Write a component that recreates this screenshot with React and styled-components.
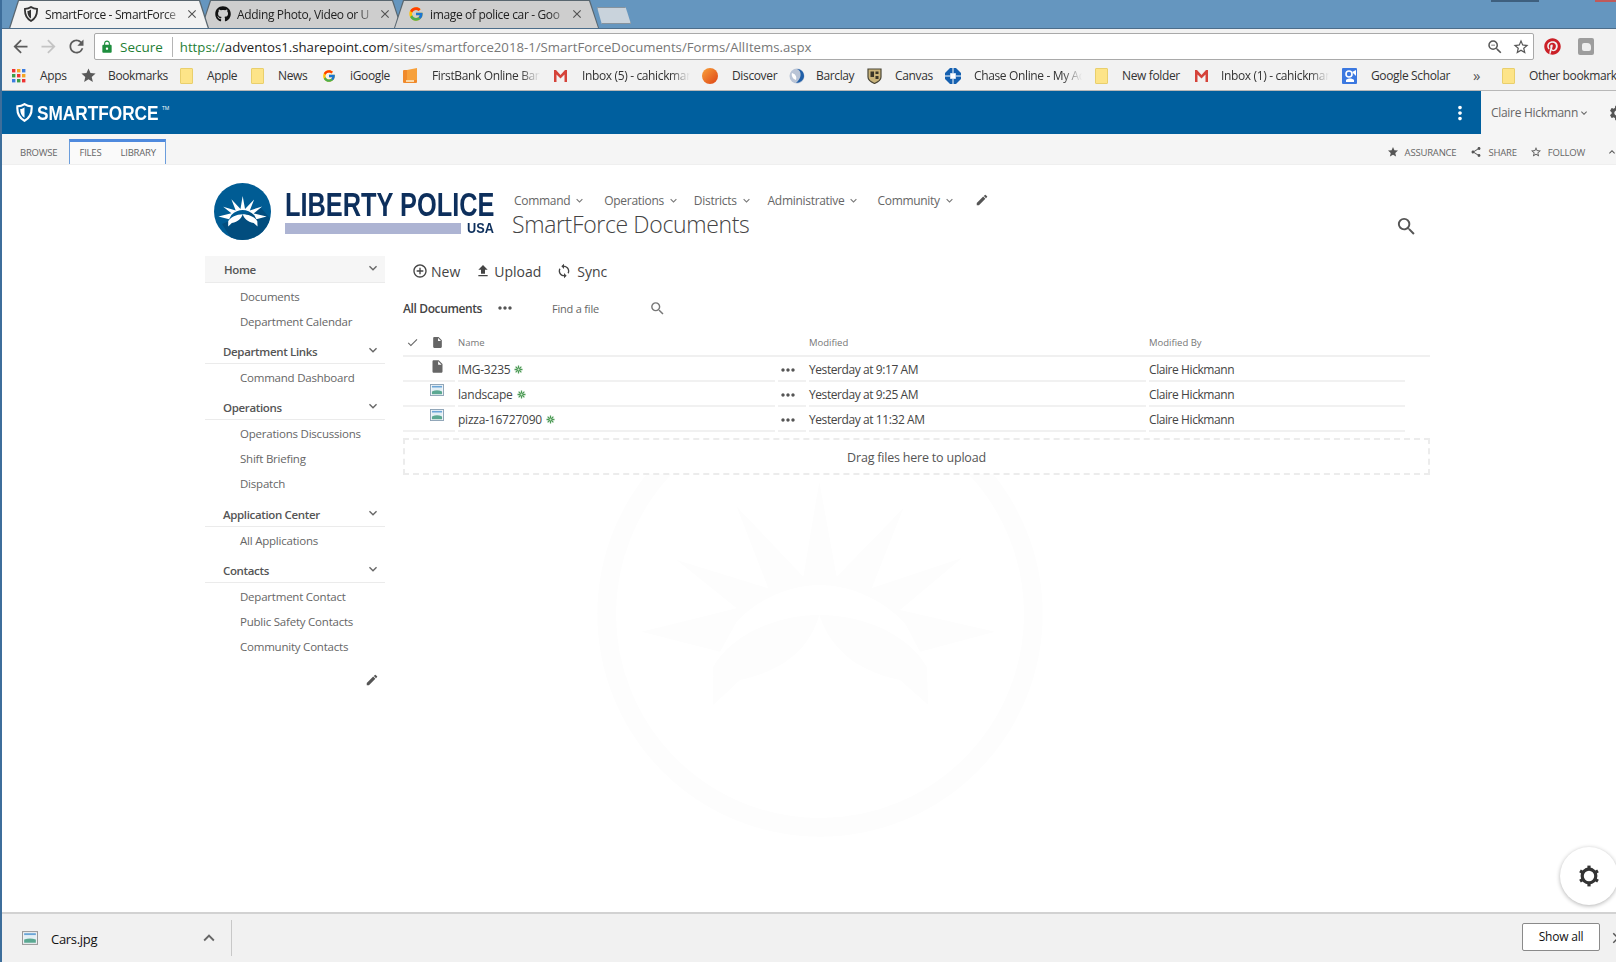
import React from "react";
import styled, { createGlobalStyle } from "styled-components";
import {
  MdAddCircleOutline,
  MdArrowBack,
  MdArrowForward,
  MdCheck,
  MdClose,
  MdEdit,
  MdExpandLess,
  MdExpandMore,
  MdFileUpload,
  MdInsertDriveFile,
  MdLock,
  MdMoreHoriz,
  MdMoreVert,
  MdRefresh,
  MdSearch,
  MdSettings,
  MdShare,
  MdStar,
  MdStarBorder,
  MdSync,
  MdZoomOut,
} from "react-icons/md";
import { FaGithub, FaPinterest } from "react-icons/fa";
import { FcGoogle } from "react-icons/fc";

const GlobalStyle = createGlobalStyle`
  html, body {
    margin: 0;
    padding: 0;
    background: #fff;
    overflow: hidden;
  }
  * { box-sizing: border-box; }
`;

const FONT = `"Open Sans", "Noto Sans", sans-serif`;

const Page = styled.div`
  width: 1616px;
  height: 962px;
  display: flex;
  flex-direction: column;
  overflow: hidden;
  border-left: 2px solid #3d6e9b;
  font-family: ${FONT};
  color: #444;
  background: #fff;
`;

/* ---- browser chrome ---- */
const TabStrip = styled.div`
  height: 29px;
  flex: none;
  display: flex;
  align-items: flex-end;
  padding-left: 7px;
  background: #6596bf;
  border-bottom: 1px solid #4c6d8a;
  position: relative;
`;

const Tab = styled.div`
  width: ${(p) => p.$w}px;
  height: 28px;
  margin-right: -8px;
  position: relative;
  display: flex;
  align-items: center;
  padding: 0 ${(p) => p.$pr}px 0 14px;
  background: #59666f;
  clip-path: polygon(0 100%, 9px 0, calc(100% - 9px) 0, 100% 100%);
  z-index: ${(p) => (p.$active ? 2 : 1)};
  font-size: 12px;
  letter-spacing: -0.35px;
  color: #222;

  &::before {
    content: "";
    position: absolute;
    inset: 1px 1px ${(p) => (p.$active ? "-1px" : "0")} 1px;
    background: ${(p) => (p.$active ? "#f2f2f2" : "#cecece")};
    clip-path: polygon(0 100%, 9px 0, calc(100% - 9px) 0, 100% 100%);
  }

  & > * {
    position: relative;
    z-index: 1;
    flex: none;
  }
`;

const TabLabel = styled.span`
  && {
    flex: 1;
  }
  margin-left: 6px;
  white-space: nowrap;
  overflow: hidden;
  mask-image: linear-gradient(to right, #000 85%, transparent);
`;

const NewTab = styled.div`
  width: 34px;
  height: 17px;
  margin: 0 0 4px 6px;
  background: #c9d3dc;
  border: 1px solid #86939e;
  clip-path: polygon(0 0, 84% 0, 100% 100%, 14% 100%);
`;

const WindowMark = styled.div`
  position: absolute;
  top: 0;
  left: ${(p) => p.$left}px;
  width: ${(p) => p.$w}px;
  height: 2px;
  background: ${(p) => p.$color};
`;

const Toolbar = styled.div`
  height: 35px;
  flex: none;
  display: flex;
  align-items: center;
  padding-left: 4px;
  background: #f2f2f2;
  color: #5f6368;
`;

const NavButton = styled.span`
  width: 28px;
  display: flex;
  justify-content: center;
  font-size: 21px;
  margin-right: ${(p) => p.$mr || 0}px;
  color: ${(p) => (p.$off ? "#c4c4c4" : "#5c5c5c")};
`;

const Omnibox = styled.div`
  width: 1440px;
  height: 27px;
  display: flex;
  align-items: center;
  padding: 0 3px 0 5px;
  background: #fff;
  border: 1px solid #a9a9a9;
  border-radius: 2px;
  font-size: 13.2px;
  white-space: nowrap;
`;

const SecureText = styled.span`
  color: #1e7e34;
  margin-left: 6px;
  font-size: 13.5px;
  padding-right: 9px;
  margin-right: 7px;
  border-right: 1px solid #b5b5b5;
  line-height: 20px;
`;

const UrlScheme = styled.span`
  color: #1e7e34;
`;
const UrlHost = styled.span`
  color: #222;
`;
const UrlPath = styled.span`
  color: #777;
  flex: 1;
`;

const OmniIcon = styled.span`
  display: flex;
  font-size: 18px;
  margin-left: 8px;
  color: #555;
`;

const ExtensionSlot = styled.span`
  display: flex;
  margin-left: ${(p) => p.$gap}px;
  font-size: 17px;
  color: ${(p) => p.$color};
`;

const GreyBadge = styled.span`
  width: 16px;
  height: 17px;
  border-radius: 2px;
  background: #9d9d9d;
  display: flex;
  align-items: center;
  justify-content: center;

  &::after {
    content: "";
    width: 9px;
    height: 8px;
    border-radius: 2px 4px 2px 2px;
    background: #eee;
  }
`;

const BookmarkBar = styled.div`
  height: 27px;
  flex: none;
  display: flex;
  align-items: center;
  padding: 0 0 3px 10px;
  background: #f2f2f2;
  border-bottom: 1px solid #b8b8b8;
  font-size: 12px;
  letter-spacing: -0.36px;
  color: #333;
  white-space: nowrap;
`;

const Bookmark = styled.div`
  flex: none;
  width: ${(p) => p.$w}px;
  display: flex;
  align-items: center;
  gap: ${(p) => p.$gap || 14}px;
`;

const BookmarkLabel = styled.span`
  ${(p) =>
    p.$clip &&
    `
    width: ${p.$clip}px;
    overflow: hidden;
    mask-image: linear-gradient(to right, #000 82%, transparent);
  `}
`;

const Chevrons = styled.span`
  flex: none;
  width: 16px;
  font-size: 15px;
  line-height: 16px;
  margin-top: -2px;
  color: #555;
`;

const BarDivider = styled.span`
  width: 1px;
  height: 18px;
  background: #c4c4c4;
  margin-right: 13px;
`;

const FolderIcon = styled.span`
  flex: none;
  width: 13px;
  height: 16px;
  background: #fde488;
  border: 1px solid #e9cf6c;
  border-radius: 1px;
`;

/* ---- suite bar + ribbon ---- */
const SuiteBar = styled.div`
  height: 43px;
  flex: none;
  display: flex;
  align-items: stretch;
  background: #005f9e;
`;

const Brand = styled.div`
  display: flex;
  align-items: center;
  gap: 3px;
  padding-left: 13px;
  color: #fff;
`;

const BrandName = styled.span`
  width: 122px;
  font-family: "Liberation Sans", sans-serif;
  font-weight: 700;
  font-size: 21px;
  white-space: nowrap;
  transform: scaleX(0.82);
  transform-origin: left center;
`;

const BrandTm = styled.span`
  font-size: 5px;
  margin: -10px 0 0 0;
`;

const SuiteRight = styled.div`
  margin-left: auto;
  display: flex;
  align-items: center;
`;

const SuiteDots = styled.span`
  display: flex;
  font-size: 22px;
  color: #fff;
  margin-right: 10px;
`;

const UserArea = styled.div`
  width: 135px;
  align-self: stretch;
  display: flex;
  align-items: center;
  padding-left: 10px;
  background: #f5f5f5;
  color: #666;
  font-size: 12px;
  letter-spacing: -0.3px;
  white-space: nowrap;

  svg {
    flex: none;
  }
`;

const UserGear = styled.span`
  display: flex;
  flex: none;
  font-size: 18px;
  margin-left: 18px;
  color: #555;
`;

const Ribbon = styled.div`
  height: 31px;
  flex: none;
  display: flex;
  align-items: stretch;
  padding-left: 18px;
  background: #f5f5f5;
  border-bottom: 1px solid #efefef;
  font-size: 9.5px;
  letter-spacing: -0.2px;
  color: #666;
`;

const RibbonTab = styled.span`
  display: flex;
  align-items: center;
  padding-top: 7px;
`;

const RibbonActiveGroup = styled.div`
  width: 97px;
  margin: 5px 0 0 12px;
  display: flex;
  align-items: center;
  gap: 19px;
  padding: 0 0 1px 9px;
  background: #fafafa;
  border: 1px solid #6b9ddc;
  border-top: 3px solid #4f8ade;
  border-bottom: none;
`;

const RibbonActions = styled.div`
  margin-left: auto;
  display: flex;
  align-items: center;
  padding-top: 6px;
`;

const RibbonAction = styled.span`
  display: flex;
  align-items: center;
  gap: 6px;
  margin-right: ${(p) => p.$mr}px;
  font-size: 9.5px;
  white-space: nowrap;

  svg {
    font-size: 12px;
    color: #555;
  }
`;

/* ---- page body ---- */
const Body = styled.div`
  flex: 1;
  min-height: 0;
  position: relative;
  overflow: hidden;
  padding-left: 203px;
`;

const Watermark = styled.svg`
  position: absolute;
  left: 578px;
  top: 309px;
  width: 480px;
  height: 376px;
`;

const Content = styled.div`
  position: relative;
  width: 1225px;
`;

const SiteHeader = styled.header`
  height: 91px;
  display: flex;
  padding: 18px 12px 0 9px;
`;

const Logo = styled.div`
  width: 298px;
  flex: none;
  display: flex;
  gap: 14px;
`;

const LogoText = styled.div`
  width: 210px;
  padding-top: 6px;
  color: #0d2f5c;
  font-family: "Liberation Sans", sans-serif;
  font-weight: 700;
`;

const LogoName = styled.div`
  width: 208px;
  font-size: 32.5px;
  line-height: 32px;
  white-space: nowrap;
  transform: scaleX(0.78);
  transform-origin: left center;
`;

const LogoBottom = styled.div`
  display: flex;
  align-items: center;
  gap: 6px;
  margin-top: 1px;
`;

const LogoBar = styled.span`
  flex: 1;
  height: 11px;
  background: #adb4d3;
`;

const LogoUsa = styled.span`
  width: 28px;
  font-size: 15px;
  line-height: 12px;
  transform: scaleX(0.85);
  transform-origin: left center;
`;

const TitleBlock = styled.div`
  display: flex;
  flex-direction: column;
  flex: 1;
`;

const TopNav = styled.nav`
  display: flex;
  align-items: center;
  height: 20px;
  margin: 7px 0 0 2px;
  font-size: 12px;
  letter-spacing: -0.3px;
  color: #666;
`;

const TopNavItem = styled.span`
  display: flex;
  align-items: center;
  margin-right: ${(p) => p.$mr}px;
  gap: 3px;
  white-space: nowrap;

  svg {
    font-size: 13px;
    color: #777;
  }
`;

const TopPencil = styled.span`
  display: flex;
  font-size: 14px;
  color: #555;
  margin-left: -1px;
`;

const PageTitle = styled.h1`
  margin: 0;
  font-size: 23px;
  line-height: 28px;
  font-weight: 300;
  letter-spacing: -0.35px;
  color: #444;
`;

const HeaderSearch = styled.span`
  display: flex;
  font-size: 23px;
  color: #555;
  margin-top: 32px;
`;

const Columns = styled.div`
  display: flex;
`;

const LeftNav = styled.aside`
  width: 180px;
  flex: none;
  font-size: 11.5px;
  letter-spacing: -0.22px;
`;

const NavHeading = styled.div`
  height: ${(p) => (p.$selected ? 27 : 24)}px;
  margin-top: ${(p) => p.$mt || 0}px;
  display: flex;
  align-items: center;
  justify-content: space-between;
  padding: ${(p) => (p.$selected ? "1px" : 0)} 4px 0 ${(p) => (p.$selected ? 19 : 18)}px;
  background: ${(p) => (p.$selected ? "#f6f6f6" : "transparent")};
  border-bottom: 1px solid #ebebeb;
  font-weight: 600;
  letter-spacing: -0.35px;
  color: #555;

  svg {
    font-size: 16px;
    color: #666;
    margin-top: -4px;
  }
`;

const NavItems = styled.div`
  padding-top: 1px;
`;

const NavItem = styled.div`
  height: 25px;
  display: flex;
  align-items: center;
  padding-left: 35px;
  color: #666;
  white-space: nowrap;
`;

const NavEdit = styled.div`
  display: flex;
  justify-content: flex-end;
  padding: 14px 6px 0 0;
  font-size: 14px;
  color: #555;
`;

const Main = styled.main`
  flex: 1;
  margin-left: 18px;
  min-width: 0;
`;

const CommandBar = styled.div`
  height: 30px;
  display: flex;
  align-items: center;
  padding-left: 9px;
  font-size: 14px;
  color: #444;
`;

const Command = styled.span`
  display: flex;
  align-items: center;
  gap: ${(p) => p.$gap || 3}px;
  margin-right: 15px;

  svg {
    font-size: 16px;
    color: #444;
  }
`;

const ViewBar = styled.div`
  height: 30px;
  margin-top: 7px;
  display: flex;
  align-items: center;
  font-size: 12px;
  letter-spacing: -0.38px;
`;

const ViewName = styled.span`
  font-weight: 600;
  color: #444;
  width: 92px;
`;

const ViewDots = styled.span`
  display: flex;
  width: 57px;
  font-size: 20px;
  color: #555;
`;

const FindFile = styled.span`
  width: 97px;
  font-size: 11px;
  color: #666;
  letter-spacing: -0.2px;
`;

const FindIcon = styled.span`
  display: flex;
  font-size: 17px;
  color: #777;
`;

const TableGrid = styled.div`
  display: grid;
  grid-template-columns: 52px 317px 28px 337px 1fr;
  column-gap: 3px;
`;

const HeaderRow = styled(TableGrid)`
  height: 28px;
  margin-top: 6px;
  align-items: center;
  border-bottom: 2px solid #f0f0f0;
  font-size: 9.5px;
  color: #777;
`;

const HeaderIcons = styled.span`
  display: flex;
  align-items: center;
  padding-left: 3px;
  gap: 12px;
  font-size: 13px;
  color: #666;
`;

const Row = styled(TableGrid)`
  width: 1002px;
  height: 25px;
  font-size: 12px;
  letter-spacing: -0.42px;
  color: #444;
`;

const Cell = styled.div`
  display: flex;
  align-items: center;
  padding-top: 2px;
  border-bottom: 2px solid #f1f1f1;
  white-space: nowrap;
`;

const NameCell = styled(Cell)`
  letter-spacing: -0.22px;
`;

const IconCell = styled(Cell)`
  align-items: flex-start;
  padding: 2px 0 0 27px;
`;

const NewBadge = styled.svg`
  width: 9px;
  height: 9px;
  margin-left: 4px;
`;

const RowDots = styled.span`
  display: flex;
  font-size: 20px;
  color: #555;
`;

const DropZone = styled.div`
  height: 37px;
  margin-top: 6px;
  padding-top: 2px;
  display: flex;
  align-items: center;
  justify-content: center;
  border: 2px dashed #ececec;
  font-size: 12.5px;
  letter-spacing: -0.2px;
  color: #555;
`;

const FloatingGear = styled.div`
  position: absolute;
  right: -2px;
  top: 682px;
  width: 58px;
  height: 58px;
  display: flex;
  align-items: center;
  justify-content: center;
  border-radius: 50%;
  background: #fff;
  box-shadow: 0 1px 4px rgba(0, 0, 0, 0.3);
`;

const DownloadBar = styled.footer`
  height: 50px;
  flex: none;
  display: flex;
  align-items: center;
  background: #f1f1f1;
  border-top: 2px solid #d2d2d2;
  padding-left: 20px;
  font-size: 13px;
  color: #111;
`;

const DownloadName = styled.span`
  margin: 2px 0 0 13px;
  width: 147px;
  letter-spacing: -0.3px;
`;

const DownloadCaret = styled.span`
  display: flex;
  font-size: 22px;
  color: #666;
`;

const DownloadDivider = styled.span`
  width: 1px;
  height: 36px;
  background: #c8c8c8;
  margin-left: 11px;
`;

const ShowAll = styled.button`
  margin: 0 0 3px auto;
  width: 78px;
  height: 28px;
  padding: 0;
  background: #fff;
  border: 1px solid #8a8a8a;
  border-radius: 2px;
  font: 12px ${FONT};
  letter-spacing: -0.2px;
  color: #111;
`;

const DownloadClose = styled.span`
  display: flex;
  flex: none;
  width: 7px;
  margin-left: 9px;
  font-size: 18px;
  color: #555;

  svg {
    flex: none;
  }
`;

/* ---- drawings ---- */
const CROWN =
  "M718 65 L770 350 L970 145 L875 385 L1145 295 L960 450 L1245 515 L1020 575 L975 490 C900 410 800 375 718 375 C640 375 540 410 470 485 L420 575 L185 515 L470 445 L290 300 L565 385 L470 140 L670 350 Z " +
  "M718 465 C690 560 620 630 480 660 L400 735 L400 620 C450 530 580 465 718 465 Z " +
  "M718 465 C750 560 820 630 960 660 L1045 735 L1040 620 C990 530 860 465 718 465 Z";

const Shield = ({ size, color, fill }) => (
  <svg width={size} height={size} viewBox="0 0 16 16">
    <path
      d="M8 1 C10 2.4 12 2.8 14 2.8 C14.4 8 12.4 12.6 8 15 C3.6 12.6 1.6 8 2 2.8 C4 2.8 6 2.4 8 1 Z"
      fill={fill}
      stroke={color}
      strokeWidth="1.8"
    />
    <path d="M8 3.5 V12.5 C5.5 11 4.4 8.5 4.4 5 C5.8 5 7 4.4 8 3.5 Z" fill={color} />
  </svg>
);

const AppsIcon = () => {
  const colors = ["#e33", "#f5a623", "#3b7de0", "#3a9e4a", "#e33", "#f5a623", "#3b7de0", "#3a9e4a", "#e33"];
  return (
    <svg width="14" height="14" viewBox="0 0 14 14">
      {colors.map((c, i) => (
        <rect key={i} x={(i % 3) * 5} y={Math.floor(i / 3) * 5} width="3.4" height="3.4" fill={c} />
      ))}
    </svg>
  );
};

const GmailIcon = () => (
  <svg width="15" height="14" viewBox="0 0 15 14">
    <path d="M1 1 H3 L7.5 6 L12 1 H14 V13 H11.5 V5.5 L7.5 9.5 L3.5 5.5 V13 H1 Z" fill="#d5433a" />
  </svg>
);

const FirstBankIcon = () => (
  <svg width="15" height="16" viewBox="0 0 15 16">
    <rect x="0" y="2" width="14" height="13" rx="1" fill="#f08a2c" />
    <path d="M4 2 L14 0 V12 H4 Z" fill="#f7a13c" />
    <rect x="3" y="12" width="8" height="2" fill="#fbd9a8" />
  </svg>
);

const DiscoverIcon = () => (
  <svg width="16" height="16" viewBox="0 0 16 16">
    <defs>
      <linearGradient id="disc" x1="0" y1="0" x2="1" y2="1">
        <stop offset="0" stopColor="#f9a13a" />
        <stop offset="1" stopColor="#dd4417" />
      </linearGradient>
    </defs>
    <circle cx="8" cy="8" r="8" fill="url(#disc)" />
  </svg>
);

const BarclayIcon = () => (
  <svg width="16" height="16" viewBox="0 0 16 16">
    <circle cx="8" cy="8" r="7.5" fill="#b9c4d6" />
    <path d="M8 1 C13 3 13 10 7 15 C11 15 15 12 15 8 C15 4 12 1 8 1 Z" fill="#1f5fa8" />
    <path d="M3 5 C6 6 8 8 7 12 C4 11 2 8 3 5 Z" fill="#fff" />
  </svg>
);

const CanvasIcon = () => (
  <svg width="15" height="16" viewBox="0 0 15 16">
    <path d="M1 1 H14 V9 C14 12 11 14 7.5 15.5 C4 14 1 12 1 9 Z" fill="#c9b37a" stroke="#4a4636" strokeWidth="1.2" />
    <path d="M3.5 3.5 H7 V9 H3.5 Z M8.5 3.5 H11.5 V6 H8.5 Z M8.5 8 H11.5 V11 H8.5 Z" fill="#3a3628" />
  </svg>
);

const ChaseIcon = () => (
  <svg width="16" height="16" viewBox="0 0 16 16">
    <path d="M5 0 H11 L16 5 V11 L11 16 H5 L0 11 V5 Z" fill="#1560b0" />
    <path d="M8 0 V5 M16 8 H11 M8 16 V11 M0 8 H5" stroke="#fff" strokeWidth="1" />
    <rect x="5.2" y="5.2" width="5.6" height="5.6" fill="#fff" />
  </svg>
);

const ScholarIcon = () => (
  <svg width="15" height="16" viewBox="0 0 15 16">
    <rect width="15" height="16" rx="1" fill="#3b78e0" />
    <circle cx="7" cy="6" r="3" fill="none" stroke="#fff" strokeWidth="1.6" />
    <path d="M4 12 C6 10 10 10 12 12 V14 H4 Z M10 4 L14 2 V8" fill="#fff" />
  </svg>
);

const ImageFileIcon = ({ w, h, border }) => (
  <svg width={w} height={h} viewBox="0 0 15 13">
    <rect x="0.5" y="0.5" width="14" height="12" fill="#f4f7fa" stroke={border} />
    <rect x="2" y="2" width="11" height="2" fill="#6aa5d6" />
    <path d="M2 4 H13 V8 C9 6.5 6 6.5 2 8 Z" fill="#e3eff5" />
    <path d="M2 8 C6 6.5 9 6.5 13 8 V11 H2 Z" fill="#5ba892" />
  </svg>
);

const LogoMark = () => (
  <svg width="57" height="57" viewBox="0 0 57 57">
    <defs>
      <clipPath id="logoDisc">
        <circle cx="28.5" cy="28.5" r="28.5" />
      </clipPath>
    </defs>
    <circle cx="28.5" cy="28.5" r="28.5" fill="#005c94" />
    <path d="M8 41 L20 60 L60 60 L60 40 L47 25 Z" fill="#024a78" opacity="0.8" clipPath="url(#logoDisc)" />
    <g transform="translate(-4,10) scale(0.0455)">
      <path d={CROWN} fill="#fff" />
    </g>
  </svg>
);

const GearMark = () => (
  <svg width="22" height="22" viewBox="0 0 22 22">
    <circle cx="11" cy="11" r="6.8" fill="none" stroke="#333" strokeWidth="3.2" />
    {[0, 60, 120, 180, 240, 300].map((a) => (
      <rect key={a} x="9.4" y="0.6" width="3.2" height="3.6" fill="#333" transform={`rotate(${a} 11 11)`} />
    ))}
  </svg>
);

const NewMark = () => (
  <NewBadge viewBox="0 0 9 9">
    <path d="M4.5 0.5 V8.5 M0.5 4.5 H8.5 M1.6 1.6 L7.4 7.4 M7.4 1.6 L1.6 7.4" stroke="#4c9a55" strokeWidth="1.3" />
    <circle cx="4.5" cy="4.5" r="1" fill="#cfe8cf" />
  </NewBadge>
);

/* ---- data ---- */
const tabs = [
  { w: 200, pr: 10, active: true, label: "SmartForce - SmartForce", icon: <Shield size={16} color="#333" fill="#f2f2f2" /> },
  { w: 201, pr: 10, label: "Adding Photo, Video or U", icon: <FaGithub size={16} color="#111" /> },
  { w: 205, pr: 15, label: "image of police car - Goo", icon: <FcGoogle size={16} /> },
];

const bookmarks = [
  { w: 68, label: "Apps", icon: <AppsIcon /> },
  { w: 100, label: "Bookmarks", icon: <MdStar size={17} color="#5a5a5a" />, gap: 11 },
  { w: 71, label: "Apple", icon: <FolderIcon /> },
  { w: 71, label: "News", icon: <FolderIcon /> },
  { w: 81, label: "iGoogle", icon: <FcGoogle size={14} /> },
  { w: 150, label: "FirstBank Online Banking", clip: 108, icon: <FirstBankIcon /> },
  { w: 149, label: "Inbox (5) - cahickman", clip: 108, icon: <GmailIcon /> },
  { w: 87, label: "Discover", icon: <DiscoverIcon /> },
  { w: 78, label: "Barclay", icon: <BarclayIcon />, gap: 11 },
  { w: 78, label: "Canvas", icon: <CanvasIcon />, gap: 13 },
  { w: 150, label: "Chase Online - My Accounts", clip: 108, icon: <ChaseIcon />, gap: 13 },
  { w: 99, label: "New folder", icon: <FolderIcon /> },
  { w: 148, label: "Inbox (1) - cahickman", clip: 108, icon: <GmailIcon />, gap: 12 },
  { w: 131, label: "Google Scholar", icon: <ScholarIcon />, gap: 14 },
];

const topNav = [
  { label: "Command", mr: 18 },
  { label: "Operations", mr: 14 },
  { label: "Districts", mr: 15 },
  { label: "Administrative", mr: 17 },
  { label: "Community", mr: 20 },
];

const sideNav = [
  { title: "Home", selected: true, mt: 0, items: ["Documents", "Department Calendar"] },
  { title: "Department Links", mt: 6, items: ["Command Dashboard"] },
  { title: "Operations", mt: 6, items: ["Operations Discussions", "Shift Briefing", "Dispatch"] },
  { title: "Application Center", mt: 7, items: ["All Applications"] },
  { title: "Contacts", mt: 6, items: ["Department Contact", "Public Safety Contacts", "Community Contacts"] },
];

const files = [
  { name: "IMG-3235", modified: "Yesterday at 9:17 AM", doc: true },
  { name: "landscape", modified: "Yesterday at 9:25 AM" },
  { name: "pizza-16727090", modified: "Yesterday at 11:32 AM" },
];

const App = () => {
  return (
    <Page>
      <GlobalStyle />
      <TabStrip>
        {tabs.map((t) => (
          <Tab key={t.label} $w={t.w} $pr={t.pr} $active={t.active}>
            {t.icon}
            <TabLabel>{t.label}</TabLabel>
            <MdClose size={14} color="#555" />
          </Tab>
        ))}
        <NewTab />
        <WindowMark $left={1489} $w={48} $color="#3e5f7e" />
        <WindowMark $left={1593} $w={21} $color="#c05a5a" />
      </TabStrip>

      <Toolbar>
        <NavButton>
          <MdArrowBack />
        </NavButton>
        <NavButton $off>
          <MdArrowForward />
        </NavButton>
        <NavButton $mr={4}>
          <MdRefresh />
        </NavButton>
        <Omnibox>
          <MdLock size={14} color="#1e8e3e" />
          <SecureText>Secure</SecureText>
          <UrlScheme>https://</UrlScheme>
          <UrlHost>adventos1.sharepoint.com</UrlHost>
          <UrlPath>/sites/smartforce2018-1/SmartForceDocuments/Forms/AllItems.aspx</UrlPath>
          <OmniIcon>
            <MdZoomOut />
          </OmniIcon>
          <OmniIcon>
            <MdStarBorder />
          </OmniIcon>
        </Omnibox>
        <ExtensionSlot $gap={10} $color="#cb2027">
          <FaPinterest />
        </ExtensionSlot>
        <ExtensionSlot $gap={17} $color="#999">
          <GreyBadge />
        </ExtensionSlot>
      </Toolbar>

      <BookmarkBar>
        {bookmarks.map((b) => (
          <Bookmark key={b.label} $w={b.w} $gap={b.gap}>
            {b.icon}
            <BookmarkLabel $clip={b.clip}>{b.label}</BookmarkLabel>
          </Bookmark>
        ))}
        <Chevrons>»</Chevrons>
        <BarDivider />
        <Bookmark $w={120}>
          <FolderIcon />
          Other bookmarks
        </Bookmark>
      </BookmarkBar>

      <SuiteBar>
        <Brand>
          <Shield size={19} color="#fff" fill="#005f9e" />
          <BrandName>SMARTFORCE</BrandName>
          <BrandTm>TM</BrandTm>
        </Brand>
        <SuiteRight>
          <SuiteDots>
            <MdMoreVert />
          </SuiteDots>
          <UserArea>
            Claire Hickmann
            <MdExpandMore size={12} />
            <UserGear>
              <MdSettings />
            </UserGear>
          </UserArea>
        </SuiteRight>
      </SuiteBar>

      <Ribbon>
        <RibbonTab>BROWSE</RibbonTab>
        <RibbonActiveGroup>
          <span>FILES</span>
          <span>LIBRARY</span>
        </RibbonActiveGroup>
        <RibbonActions>
          <RibbonAction $mr={14}>
            <MdStar />
            ASSURANCE
          </RibbonAction>
          <RibbonAction $mr={13}>
            <MdShare />
            SHARE
          </RibbonAction>
          <RibbonAction $mr={21}>
            <MdStarBorder />
            FOLLOW
          </RibbonAction>
          <RibbonAction $mr={-2}>
            <MdExpandLess />
          </RibbonAction>
        </RibbonActions>
      </Ribbon>

      <Body>
        <Watermark viewBox="0 42 1440 1128">
          <circle cx="720" cy="462" r="640" fill="none" stroke="#fdfdfd" strokeWidth="56" />
          <path d={CROWN} fill="#fdfdfd" />
        </Watermark>
        <Content>
          <SiteHeader>
            <Logo>
              <LogoMark />
              <LogoText>
                <LogoName>LIBERTY POLICE</LogoName>
                <LogoBottom>
                  <LogoBar />
                  <LogoUsa>USA</LogoUsa>
                </LogoBottom>
              </LogoText>
            </Logo>
            <TitleBlock>
              <TopNav>
                {topNav.map((n) => (
                  <TopNavItem key={n.label} $mr={n.mr}>
                    {n.label}
                    <MdExpandMore />
                  </TopNavItem>
                ))}
                <TopPencil>
                  <MdEdit />
                </TopPencil>
              </TopNav>
              <PageTitle>SmartForce Documents</PageTitle>
            </TitleBlock>
            <HeaderSearch>
              <MdSearch />
            </HeaderSearch>
          </SiteHeader>

          <Columns>
            <LeftNav>
              {sideNav.map((group) => (
                <div key={group.title}>
                  <NavHeading $selected={group.selected} $mt={group.mt}>
                    {group.title}
                    <MdExpandMore />
                  </NavHeading>
                  <NavItems>
                    {group.items.map((item) => (
                      <NavItem key={item}>{item}</NavItem>
                    ))}
                  </NavItems>
                </div>
              ))}
              <NavEdit>
                <MdEdit />
              </NavEdit>
            </LeftNav>

            <Main>
              <CommandBar>
                <Command>
                  <MdAddCircleOutline />
                  New
                </Command>
                <Command>
                  <MdFileUpload />
                  Upload
                </Command>
                <Command $gap={5}>
                  <MdSync />
                  Sync
                </Command>
              </CommandBar>

              <ViewBar>
                <ViewName>All Documents</ViewName>
                <ViewDots>
                  <MdMoreHoriz />
                </ViewDots>
                <FindFile>Find a file</FindFile>
                <FindIcon>
                  <MdSearch />
                </FindIcon>
              </ViewBar>

              <HeaderRow>
                <HeaderIcons>
                  <MdCheck />
                  <MdInsertDriveFile />
                </HeaderIcons>
                <span>Name</span>
                <span />
                <span>Modified</span>
                <span>Modified By</span>
              </HeaderRow>

              {files.map((f) => (
                <Row key={f.name}>
                  <IconCell>
                    {f.doc ? (
                      <MdInsertDriveFile size={15} color="#666" />
                    ) : (
                      <ImageFileIcon w={14} h={12} border="#8aa0b4" />
                    )}
                  </IconCell>
                  <NameCell>
                    {f.name}
                    <NewMark />
                  </NameCell>
                  <Cell>
                    <RowDots>
                      <MdMoreHoriz />
                    </RowDots>
                  </Cell>
                  <Cell>{f.modified}</Cell>
                  <Cell>Claire Hickmann</Cell>
                </Row>
              ))}

              <DropZone>Drag files here to upload</DropZone>
            </Main>
          </Columns>
        </Content>
        <FloatingGear>
          <GearMark />
        </FloatingGear>
      </Body>

      <DownloadBar>
        <ImageFileIcon w={16} h={14} border="#999" />
        <DownloadName>Cars.jpg</DownloadName>
        <DownloadCaret>
          <MdExpandLess />
        </DownloadCaret>
        <DownloadDivider />
        <ShowAll>Show all</ShowAll>
        <DownloadClose>
          <MdClose />
        </DownloadClose>
      </DownloadBar>
    </Page>
  );
};

export default App;
